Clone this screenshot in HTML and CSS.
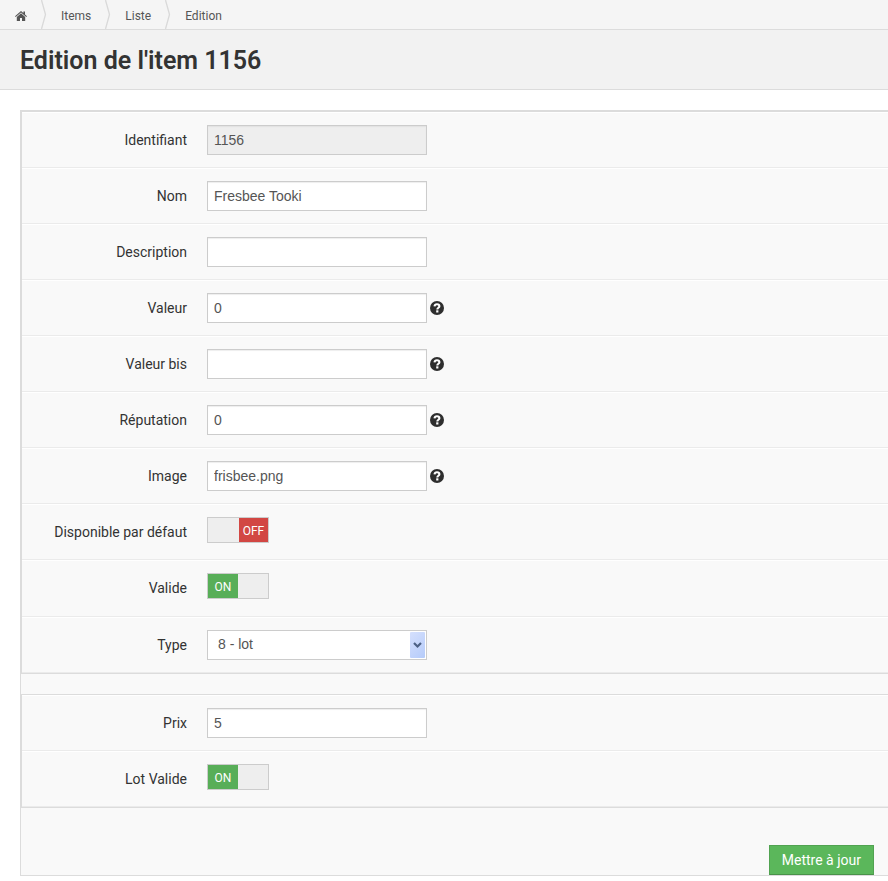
FILE: index.html
```html
<!DOCTYPE html>
<html lang="fr">
<head>
<meta charset="utf-8">
<title>Edition de l'item 1156</title>
<link rel="stylesheet" href="styles.css">
</head>
<body>
<svg class="defs" aria-hidden="true">
  <symbol id="help" viewBox="0 0 14 14">
    <circle cx="7" cy="7" r="7" fill="#2e2e2e"/>
    <path d="M4.500 5.300C4.700 3.700 5.700 3.200 7 3.200c1.400 0 2.400.8 2.400 2C9.400 6.800 7.300 6.700 7.300 8.400" fill="none" stroke="#fff" stroke-width="2.100"/>
    <path d="M6.200 9.300h2.200v2.200H6.200z" fill="#fff"/>
  </symbol>
  <symbol id="chevron" viewBox="0 0 6 29">
    <path d="M.5 0L4.500 14.500L.5 29" fill="none" stroke="#d9d9d9" stroke-width="1.300"/>
  </symbol>
</svg>
<nav class="breadcrumb">
  <a class="home" href="#" aria-label="Accueil"><svg width="12" height="10" viewBox="0 0 12 10"><path d="M6 0L0 5.300l.7.8L6 1.500l5.300 4.600.7-.8-2-1.800V.5H8.400v1.600z" fill="#555"/><path d="M6 2.300L1.800 6v4h3.200V7h2v3h3.200V6z" fill="#555"/></svg></a>
  <svg class="sep"><use href="#chevron"/></svg>
  <a href="#">Items</a>
  <svg class="sep"><use href="#chevron"/></svg>
  <a href="#">Liste</a>
  <svg class="sep"><use href="#chevron"/></svg>
  <a href="#">Edition</a>
</nav>
<header class="heading"><h1>Edition de l'item 1156</h1></header>
<form class="panel">
  <div class="group">
    <div class="row"><label for="id">Identifiant</label><input class="field" id="id" value="1156" disabled></div>
    <div class="row"><label for="nom">Nom</label><input class="field" id="nom" value="Fresbee Tooki"></div>
    <div class="row"><label for="desc">Description</label><input class="field" id="desc"></div>
    <div class="row"><label for="val">Valeur</label><input class="field" id="val" value="0"><svg class="help"><use href="#help"/></svg></div>
    <div class="row"><label for="bis">Valeur bis</label><input class="field" id="bis"><svg class="help"><use href="#help"/></svg></div>
    <div class="row"><label for="rep">Réputation</label><input class="field" id="rep" value="0"><svg class="help"><use href="#help"/></svg></div>
    <div class="row"><label for="img">Image</label><input class="field" id="img" value="frisbee.png"><svg class="help"><use href="#help"/></svg></div>
    <div class="row"><label for="dispo">Disponible par défaut</label><span class="switch"><input type="checkbox" id="dispo"><span class="on">ON</span><span class="off">OFF</span></span></div>
    <div class="row tall"><label for="valide">Valide</label><span class="switch"><input type="checkbox" id="valide" checked><span class="on">ON</span><span class="off">OFF</span></span></div>
    <div class="row"><label for="type">Type</label><span class="picker"><select class="field" id="type"><option>8 - lot</option></select><svg class="arrow" viewBox="0 0 15 26"><path d="M4 11l3.500 3.500L11 11" fill="none" stroke="#4d6185" stroke-width="2.200"/></svg></span></div>
  </div>
  <div class="group">
    <div class="row"><label for="prix">Prix</label><input class="field" id="prix" value="5"></div>
    <div class="row"><label for="lot">Lot Valide</label><span class="switch"><input type="checkbox" id="lot" checked><span class="on">ON</span><span class="off">OFF</span></span></div>
  </div>
  <div class="actions"><button type="button">Mettre à jour</button></div>
</form>
</body>
</html>
```

FILE: styles.css
```css
* { box-sizing: border-box; }
body {
  margin: 0;
  background: #fff;
  color: #333;
  font: 14px/20px Roboto, sans-serif;
}
.defs { display: none; }
.breadcrumb {
  display: flex;
  align-items: center;
  height: 30px;
  padding-left: 15px;
  background: #f5f5f5;
  border-bottom: 1px solid #dcdcdc;
  font-size: 12px;
}
.breadcrumb a {
  padding: 2px 14px 0 14px;
  color: #555;
  text-decoration: none;
}
.breadcrumb .home {
  display: flex;
  padding: 2px 14px 0 0;
}
.sep { width: 6px; height: 29px; }
.heading {
  height: 60px;
  padding: 16px 20px 0;
  background: #f2f2f2;
  border-bottom: 1px solid #dcdcdc;
}
h1 {
  margin: 0;
  font-size: 25px;
  font-weight: 600;
  line-height: 30px;
}
.panel {
  margin: 20px 0 0 20px;
  background: #f9f9f9;
  border: 1px solid #dcdcdc;
  border-right: 0;
}
.group {
  border: 1px solid #dcdcdc;
  border-right: 0;
}
.group + .group { margin-top: 20px; }
.row {
  display: flex;
  align-items: flex-start;
  min-height: 56px;
  padding-top: 12px;
  border-top: 1px solid #fff;
  border-bottom: 1px solid #ebebeb;
}
.row.tall { min-height: 57px; }
.row label {
  width: 165px;
  margin-right: 20px;
  padding-top: 5px;
  text-align: right;
}
.field {
  width: 220px;
  height: 30px;
  margin: 0;
  padding: 4px 6px;
  color: #555;
  background: #fff;
  border: 1px solid #ccc;
  border-radius: 0;
  box-shadow: inset 0 1px 1px #eee;
  font: 14px/20px "Liberation Sans", Arial, sans-serif;
}
.field:disabled { background: #eee; box-shadow: inset 0 1px 1px #e2e2e2; }
.help {
  width: 14px;
  height: 14px;
  margin: 8px 0 0 3px;
}
.switch {
  position: relative;
  display: flex;
  width: 62px;
  height: 26px;
  background: #eee;
  border: 1px solid #ccc;
  color: #fff;
  font-size: 12px;
  line-height: 26px;
  text-align: center;
}
.switch input {
  position: absolute;
  inset: 0;
  width: 100%;
  height: 100%;
  margin: 0;
  opacity: 0;
}
.on { width: 30px; background: #58ae58; }
.off { width: 29px; margin-left: auto; background: #d24743; }
.switch input:checked ~ .off,
.switch input:not(:checked) ~ .on { display: none; }
.picker { position: relative; display: flex; }
.picker .field {
  appearance: none;
  padding: 3px 20px 5px 10px;
  box-shadow: none;
}
.arrow {
  position: absolute;
  top: 2px;
  right: 2px;
  width: 15px;
  height: 26px;
  border-radius: 1px;
  background: linear-gradient(135deg, #d5e0fd, #b5cbfa);
  pointer-events: none;
}
.actions {
  display: flex;
  justify-content: flex-end;
  padding: 37px 14px 0;
}
button {
  height: 30px;
  padding: 0 12px;
  color: #fff;
  background: #5bb75b;
  border: 1px solid #51a351;
  border-bottom-color: #499249;
  font: 14px/20px Roboto, sans-serif;
}
```
